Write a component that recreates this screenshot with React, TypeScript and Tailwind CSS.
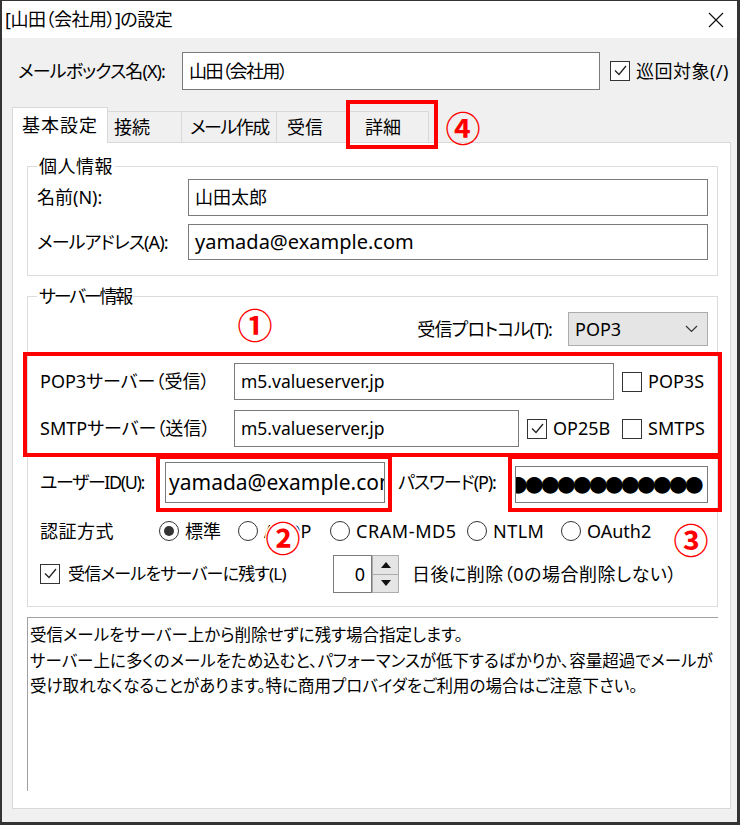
import type { ReactNode } from "react";

function CheckBox({ checked = false }: { checked?: boolean }) {
  return (
    <span className="relative flex h-[20px] w-[20px] shrink-0 border border-[#333] bg-white">
      {checked && (
        <svg className="absolute left-0 top-0" width="18" height="18" viewBox="0 0 18 18" fill="none">
          <path d="M4 8.5 L8 12.5 L15 4" stroke="#222" strokeWidth="1.3" />
        </svg>
      )}
    </span>
  );
}

function Radio({ on = false }: { on?: boolean }) {
  return (
    <span className="flex h-[20px] w-[20px] shrink-0 items-center justify-center rounded-full border border-[#333] bg-white">
      {on && <span className="h-[10px] w-[10px] rounded-full bg-[#333]" />}
    </span>
  );
}

function Field({ className = "", children }: { className?: string; children?: ReactNode }) {
  return (
    <div
      className={`flex shrink-0 items-center overflow-hidden whitespace-nowrap border border-[#7a7a7a] bg-white pl-[6px] ${className}`}
    >
      {children}
    </div>
  );
}

function Mark({ n, className = "" }: { n: string; className?: string }) {
  return (
    <span
      className={`absolute flex h-[36px] w-[36px] items-center justify-center text-[35px] font-bold leading-none text-[#ff0000] ${className}`}
    >
      {n}
    </span>
  );
}

const tabs = [
  { label: "接続", w: "w-[74px] pl-[6px]" },
  { label: "メール作成", w: "w-[95px] pl-[8px] tracking-[-1.5px]" },
  { label: "受信", w: "w-[73px] pl-[10px]" },
  { label: "詳細", w: "w-[79px] pl-[15px]" },
];

export default function App() {
  return (
    <div className="relative h-[825px] w-[740px] overflow-hidden bg-[#333] pb-[3px] pl-[2px] pr-[3px] pt-px text-[18px] text-black [font-family:'Noto_Sans','Noto_Sans_CJK_JP',sans-serif] [font-feature-settings:'palt']">
      <div className="flex h-full flex-col bg-[#f0f0f0]">
        {/* title bar */}
        <div className="flex h-[37px] shrink-0 items-center justify-between bg-white pl-[3px] pr-[13px]">
          <span className="tracking-[-0.5px]">[山田（会社用）]の設定</span>
          <svg width="16" height="16" viewBox="0 0 16 16" fill="none">
            <path d="M1 1 L15 15 M15 1 L1 15" stroke="#111" strokeWidth="1.2" />
          </svg>
        </div>

        {/* mailbox name */}
        <div className="mt-[14px] flex h-[38px] items-center pl-[16px]">
          <span className="w-[164px] tracking-[-0.9px]">メールボックス名(X):</span>
          <Field className="h-[38px] w-[418px] tracking-[-1.5px]">山田（会社用）</Field>
          <div className="ml-[10px] flex items-center gap-[6px]">
            <CheckBox checked />
            <span className="tracking-[0.5px]">巡回対象(/)</span>
          </div>
        </div>

        {/* tabs */}
        <div className="ml-[10px] mt-[17px] flex h-[35px] items-end whitespace-nowrap">
          <div className="relative z-10 -mb-px flex h-[36px] w-[96px] items-center border border-b-0 border-[#d9d9d9] bg-white pl-[9px] tracking-[1px]">
            基本設定
          </div>
          {tabs.map((t) => (
            <div
              key={t.label}
              className={`flex h-[31px] items-center border-r border-t border-[#d9d9d9] ${t.w}`}
            >
              {t.label}
            </div>
          ))}
        </div>

        {/* tab page */}
        <div className="ml-[10px] h-[667px] w-[719px] border border-[#d9d9d9] bg-white">
          <fieldset className="ml-[14px] mt-[11px] w-[691px] border border-[#dcdcdc]">
            <legend className="ml-[9px] px-[2px] leading-[24px] tracking-[0.5px]">個人情報</legend>
            <div className="px-[9px] pb-[15px] pt-px">
              <div className="flex h-[37px] items-center">
                <span className="w-[151px]">名前(N):</span>
                <Field className="h-[37px] w-[520px]">山田太郎</Field>
              </div>
              <div className="mt-[8px] flex h-[36px] items-center">
                <span className="w-[151px] tracking-[-0.9px]">メールアドレス(A):</span>
                <Field className="h-[36px] w-[520px] text-[20px]">yamada@example.com</Field>
              </div>
            </div>
          </fieldset>

          <fieldset className="ml-[14px] mt-[8px] w-[691px] border border-[#dcdcdc]">
            <legend className="ml-[9px] px-[2px] leading-[24px] tracking-[-2.2px]">サーバー情報</legend>
            <div className="pb-[13px]">
              <div className="mt-[4px] flex h-[34px] items-center justify-end gap-[16px] pr-[9px]">
                <span className="tracking-[-0.8px]">受信プロトコル(T):</span>
                <div className="flex h-[34px] w-[140px] items-center justify-between border border-[#adadad] bg-[#e5e5e5] pl-[6px] pr-[9px]">
                  <span>POP3</span>
                  <svg width="13" height="8" viewBox="0 0 13 8" fill="none">
                    <path d="M1 1 L6.5 6.5 L12 1" stroke="#333" strokeWidth="1.2" />
                  </svg>
                </div>
              </div>

              <div className="mt-[17px] flex h-[37px] items-center pl-[12px]">
                <span className="w-[194px]">POP3サーバー（受信）</span>
                <Field className="h-[37px] w-[380px] text-[17.5px]">m5.valueserver.jp</Field>
                <span className="ml-[8px]">
                  <CheckBox />
                </span>
                <span className="ml-[6px]">POP3S</span>
              </div>

              <div className="mt-[10px] flex h-[37px] items-center pl-[12px]">
                <span className="w-[194px]">SMTPサーバー（送信）</span>
                <Field className="h-[37px] w-[285px] text-[17.5px]">m5.valueserver.jp</Field>
                <div className="ml-[8px] flex w-[95px] items-center gap-[6px]">
                  <CheckBox checked />
                  <span>OP25B</span>
                </div>
                <CheckBox />
                <span className="ml-[6px]">SMTPS</span>
              </div>

              <div className="mt-[15px] flex h-[41px] items-center pl-[12px]">
                <span className="w-[125px] tracking-[-1.4px]">ユーザーID(U):</span>
                <Field className="h-[41px] w-[220px] !pl-[3px] text-[21px]">yamada@example.com</Field>
                <span className="ml-[13px] w-[117px] tracking-[-1.1px]">パスワード(P):</span>
                <Field className="h-[37px] w-[193px] justify-end self-end !pl-0 pr-[6px] text-[18.5px] tracking-[-2.5px] [font-family:'Noto_Sans_CJK_JP',sans-serif]">
                  ●●●●●●●●●●●●●●
                </Field>
              </div>

              <div className="mt-[16px] flex h-[24px] items-center pl-[12px]">
                <span className="w-[119px] tracking-[0.5px]">認証方式</span>
                <div className="flex w-[79px] items-center gap-[6px]">
                  <Radio on />
                  <span>標準</span>
                </div>
                <div className="flex w-[92px] items-center gap-[6px]">
                  <Radio />
                  <span>APOP</span>
                </div>
                <div className="flex w-[137px] items-center gap-[6px]">
                  <Radio />
                  <span className="tracking-[0.6px]">CRAM-MD5</span>
                </div>
                <div className="flex w-[94px] items-center gap-[6px]">
                  <Radio />
                  <span className="tracking-[0.5px]">NTLM</span>
                </div>
                <div className="flex items-center gap-[6px]">
                  <Radio />
                  <span>OAuth2</span>
                </div>
              </div>

              <div className="mt-[12px] flex h-[38px] items-center pl-[12px]">
                <div className="flex w-[293px] items-center gap-[8px]">
                  <CheckBox checked />
                  <span className="text-[17px] tracking-[-0.8px]">受信メールをサーバーに残す(L)</span>
                </div>
                <div className="flex h-[38px] w-[39px] items-center justify-end border border-[#7a7a7a] bg-white pr-[6px]">
                  0
                </div>
                <div className="flex h-[38px] w-[27px] flex-col">
                  <div className="flex flex-1 items-center justify-center border border-[#adadad] bg-[#e5e5e5]">
                    <svg width="10" height="6" viewBox="0 0 10 6">
                      <path d="M0 6 L5 0 L10 6 Z" fill="#111" />
                    </svg>
                  </div>
                  <div className="flex flex-1 items-center justify-center border border-t-0 border-[#adadad] bg-[#e5e5e5]">
                    <svg width="10" height="6" viewBox="0 0 10 6">
                      <path d="M0 0 L10 0 L5 6 Z" fill="#111" />
                    </svg>
                  </div>
                </div>
                <span className="ml-[13px] tracking-[0.5px]">日後に削除（0の場合削除しない）</span>
              </div>
            </div>
          </fieldset>

          <div className="ml-[14px] mt-[10px] h-[174px] w-[691px] border-l border-t border-[#a0a0a0] pl-[2px] pt-[4px] text-[16.5px] leading-[25.5px]">
            <p>受信メールをサーバー上から削除せずに残す場合指定します。</p>
            <p>サーバー上に多くのメールをため込むと、パフォーマンスが低下するばかりか、容量超過でメールが</p>
            <p>受け取れなくなることがあります。特に商用プロバイダをご利用の場合はご注意下さい。</p>
          </div>
        </div>
      </div>

      {/* annotations */}
      <div className="absolute left-[346px] top-[100px] h-[49px] w-[92px] border-4 border-[#ff0000]" />
      <div className="absolute left-[23px] top-[352px] h-[105px] w-[699px] border-4 border-[#ff0000]" />
      <div className="absolute left-[156px] top-[455px] h-[57px] w-[236px] border-4 border-[#ff0000]" />
      <div className="absolute left-[508px] top-[455px] h-[57px] w-[214px] border-4 border-[#ff0000]" />
      <Mark n="④" className="left-[445px] top-[110px]" />
      <Mark n="①" className="left-[237px] top-[307px]" />
      <Mark n="②" className="left-[265px] top-[520px] rounded-full bg-white" />
      <Mark n="③" className="left-[673px] top-[522px]" />
    </div>
  );
}
